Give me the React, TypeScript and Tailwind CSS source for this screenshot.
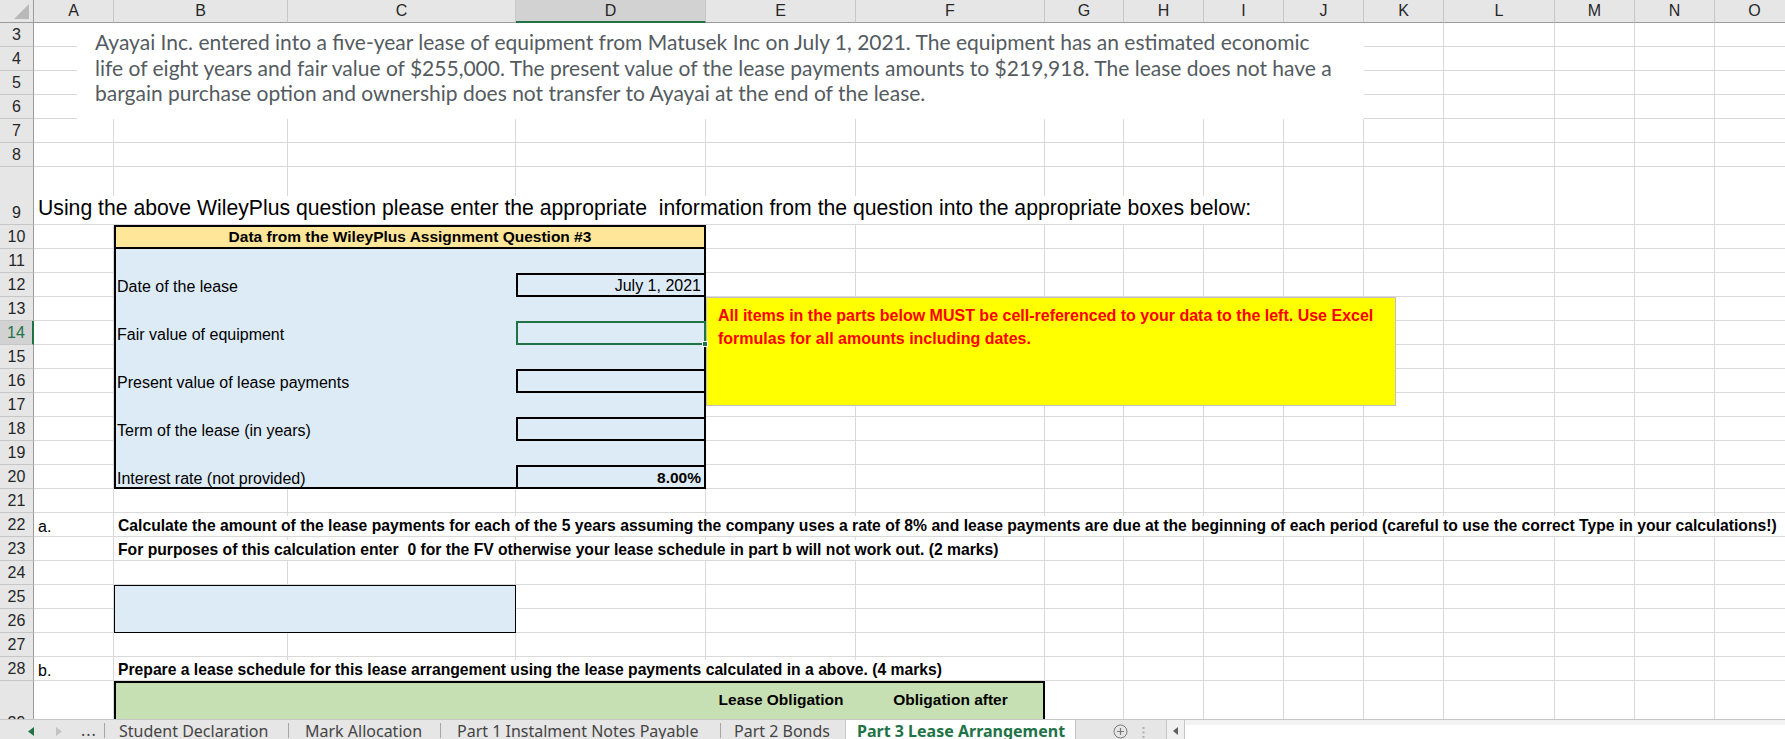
import React from "react";

// same template for the cell layer and the content layer on top of it
const GRID =
  "grid grid-cols-[34px_80px_174px_228px_190px_150px_189px_79px_80px_80px_80px_80px_111px_80px_80px_80px] grid-rows-[23px_repeat(6,24px)_58px_repeat(19,24px)_54px]";

const COLS = ["A", "B", "C", "D", "E", "F", "G", "H", "I", "J", "K", "L", "M", "N", "O"];
const ROWS = [3, 4, 5, 6, 7, 8, 9, 10, 11, 12, 13, 14, 15, 16, 17, 18, 19, 20, 21, 22, 23, 24, 25, 26, 27, 28, 29];

const PARAGRAPH = [
  "Ayayai Inc. entered into a five-year lease of equipment from Matusek Inc on July 1, 2021. The equipment has an estimated economic",
  "life of eight years and fair value of $255,000. The present value of the lease payments amounts to $219,918. The lease does not have a",
  "bargain purchase option and ownership does not transfer to Ayayai at the end of the lease.",
];

function Cells() {
  return (
    <div className={GRID}>
      <div className="relative bg-[#e6e6e6] border-r border-b border-[#9b9b9b]">
        <svg className="absolute right-[4px] bottom-[3px]" width="15" height="15" viewBox="0 0 15 15">
          <polygon points="15,0 15,15 0,15" fill="#b9b9b9" />
        </svg>
      </div>
      {COLS.map((c) =>
        c === "D" ? (
          <div
            key={c}
            className="flex items-center justify-center bg-[#d2d2d2] border-r border-r-[#c6c6c6] border-b-2 border-b-[#217346] text-[16px] text-[#262626]"
          >
            {c}
          </div>
        ) : (
          <div
            key={c}
            className="flex items-center justify-center bg-[#e6e6e6] border-r border-b border-r-[#c6c6c6] border-b-[#9b9b9b] text-[16px] text-[#262626]"
          >
            {c}
          </div>
        )
      )}
      {ROWS.map((r) => (
        <React.Fragment key={r}>
          {r === 14 ? (
            <div className="flex items-end justify-center bg-[#d2d2d2] border-r-2 border-r-[#217346] border-b border-b-[#c6c6c6] text-[16px] leading-[22px] text-[#217346]">
              {r}
            </div>
          ) : (
            <div className="flex items-end justify-center bg-[#e6e6e6] border-r border-b border-r-[#9b9b9b] border-b-[#c6c6c6] text-[16px] leading-[22px] text-[#262626]">
              {r}
            </div>
          )}
          {COLS.map((c) => (
            <div key={c} className="border-r border-b border-[#d9d9d9]" />
          ))}
        </React.Fragment>
      ))}
    </div>
  );
}

function Label({ children, className }: { children: React.ReactNode; className: string }) {
  return (
    <div className={`flex items-end pl-[3px] text-[16px] leading-[20px] text-black whitespace-nowrap ${className}`}>
      {children}
    </div>
  );
}

function Content() {
  return (
    <div className={`absolute inset-0 ${GRID}`}>
      {/* question text box */}
      <div className="col-start-2 col-end-12 row-start-2 row-end-6 ml-[43px] bg-white pl-[18px] pt-[6px] font-['Lato',sans-serif] text-[21px] leading-[25.5px] text-[#545b61] whitespace-nowrap overflow-hidden">
        {PARAGRAPH.map((line) => (
          <div key={line}>{line}</div>
        ))}
      </div>

      {/* row 9 */}
      <div className="col-start-2 col-end-17 row-start-8 flex items-end mb-px">
        <span className="bg-white pl-[4px] pr-[2px] pb-[4px] text-[21.2px] leading-[24px] text-black whitespace-pre">
          Using the above WileyPlus question please enter the appropriate  information from the question into the appropriate boxes below:
        </span>
      </div>

      {/* data block */}
      <div className="col-start-3 col-end-6 row-start-9 flex items-center justify-center bg-[#ffe699] border-2 border-black text-[15.5px] font-bold text-black">
        Data from the WileyPlus Assignment Question #3
      </div>
      <div className="col-start-3 col-end-6 row-start-10 row-end-20 bg-[#ddebf7] border-x-2 border-b-2 border-black" />

      <Label className="col-start-3 col-end-5 row-start-11">Date of the lease</Label>
      <Label className="col-start-3 col-end-5 row-start-13">Fair value of equipment</Label>
      <Label className="col-start-3 col-end-5 row-start-15">Present value of lease payments</Label>
      <Label className="col-start-3 col-end-5 row-start-17">Term of the lease (in years)</Label>
      <Label className="col-start-3 col-end-5 row-start-19">Interest rate (not provided)</Label>

      <div className="col-start-5 row-start-11 flex items-end justify-end pr-[3px] border-2 border-black text-[16px] leading-[19px] text-black">
        July 1, 2021
      </div>
      <div className="relative col-start-5 row-start-13 border-2 border-[#217346]">
        <div className="absolute -right-[4px] -bottom-[4px] w-[6px] h-[6px] bg-[#217346] border border-white" />
      </div>
      <div className="col-start-5 row-start-15 border-2 border-black" />
      <div className="col-start-5 row-start-17 border-2 border-black" />
      <div className="col-start-5 row-start-19 flex items-end justify-end pr-[3px] border-2 border-black text-[15.5px] font-bold leading-[19px] text-black">
        8.00%
      </div>

      {/* note */}
      <div className="col-start-6 col-end-13 row-start-12 row-end-17 mr-[48px] mb-[11px] bg-[#ffff00] border border-[#bfbfbf] pl-[11px] pt-[6px] text-[16px] font-bold leading-[23px] text-[#ff0000] whitespace-nowrap">
        <div>All items in the parts below MUST be cell-referenced to your data to the left. Use Excel</div>
        <div>formulas for all amounts including dates.</div>
      </div>

      {/* part a */}
      <Label className="col-start-2 row-start-21 pl-[4px]">a.</Label>
      <div className="col-start-3 col-end-17 row-start-21 flex items-end mb-px">
        <span className="bg-white pl-[4px] text-[15.7px] font-bold leading-[20px] text-black whitespace-nowrap">
          Calculate the amount of the lease payments for each of the 5 years assuming the company uses a rate of 8% and lease payments are due at the beginning of each period (careful to use the correct Type in your calculations!)
        </span>
      </div>
      <div className="col-start-3 col-end-17 row-start-22 flex items-end mb-px">
        <span className="bg-white pl-[4px] pr-[2px] text-[15.7px] font-bold leading-[20px] text-black whitespace-pre">
          For purposes of this calculation enter  0 for the FV otherwise your lease schedule in part b will not work out. (2 marks)
        </span>
      </div>
      <div className="col-start-3 col-end-5 row-start-24 row-end-26 bg-[#ddebf7] border border-black" />

      {/* part b */}
      <Label className="col-start-2 row-start-27 pl-[4px]">b.</Label>
      <div className="col-start-3 col-end-17 row-start-27 flex items-end mb-px">
        <span className="bg-white pl-[4px] pr-[2px] text-[15.7px] font-bold leading-[20px] text-black whitespace-nowrap">
          Prepare a lease schedule for this lease arrangement using the lease payments calculated in a above. (4 marks)
        </span>
      </div>
      <div className="col-start-3 col-end-8 row-start-28 bg-[#c6e0b4] border-x-2 border-t-2 border-black" />
      <div className="col-start-6 row-start-28 pt-[9px] text-center text-[15.5px] font-bold leading-[20px] text-black">
        Lease Obligation
      </div>
      <div className="col-start-7 row-start-28 pt-[9px] text-center text-[15.5px] font-bold leading-[20px] text-black">
        Obligation after
      </div>
    </div>
  );
}

function Tab({ label, className }: { label: string; className: string }) {
  return (
    <div className={`shrink-0 pt-[1px] text-[#444] whitespace-nowrap ${className}`}>
      {label}
    </div>
  );
}

function Separator() {
  return <div className="shrink-0 w-px h-[15px] mt-[3px] bg-[#a6a6a6]" />;
}

function SheetTabs() {
  return (
    <div className="flex h-[28px] shrink-0 items-start bg-[#e6e6e6] border-t border-[#c6c6c6] font-['Noto_Sans',sans-serif] text-[16px] leading-[20px]">
      <div className="flex items-center h-[20px] w-[104px] shrink-0">
        <svg className="ml-[28px] mt-[2px]" width="6" height="9" viewBox="0 0 6 9">
          <polygon points="6,0 6,9 0,4.5" fill="#217346" />
        </svg>
        <svg className="ml-[22px] mt-[2px]" width="6" height="9" viewBox="0 0 6 9">
          <polygon points="0,0 0,9 6,4.5" fill="#c3c3c3" />
        </svg>
        <span className="ml-[19px] text-[#444] tracking-[1px]">...</span>
      </div>
      <Separator />
      <Tab label="Student Declaration" className="w-[183px] pl-[14px]" />
      <Separator />
      <Tab label="Mark Allocation" className="w-[151px] pl-[16px]" />
      <Separator />
      <Tab label="Part 1 Instalment Notes Payable" className="w-[279px] pl-[16px]" />
      <Separator />
      <Tab label="Part 2 Bonds" className="w-[124px] pl-[13px]" />
      <div className="shrink-0 h-full w-[231px] pl-[11px] pt-[1px] bg-white border-x border-[#c6c6c6] font-bold text-[#217346] whitespace-nowrap">
        Part 3 Lease Arrangement
      </div>
      <div className="flex h-[20px] w-[90px] items-center shrink-0">
        <svg className="ml-[37px] mt-[3px]" width="15" height="15" viewBox="0 0 15 15">
          <circle cx="7.5" cy="7.5" r="6.5" fill="none" stroke="#7a7a7a" strokeWidth="1" />
          <path d="M7.5 4v7M4 7.5h7" stroke="#7a7a7a" strokeWidth="1.2" />
        </svg>
        <svg className="ml-[14px] mt-[4px]" width="3" height="13" viewBox="0 0 3 13">
          <rect x="0.5" y="1" width="2" height="2" fill="#b0b0b0" />
          <rect x="0.5" y="5.5" width="2" height="2" fill="#b0b0b0" />
          <rect x="0.5" y="10" width="2" height="2" fill="#b0b0b0" />
        </svg>
      </div>
      <div className="flex flex-1 h-full bg-white border-l border-[#c6c6c6]">
        <div className="flex w-[18px] h-[20px] items-center justify-center border-r border-[#c6c6c6] bg-[#f0f0f0]">
          <svg className="mt-[2px]" width="5" height="8" viewBox="0 0 5 8">
            <polygon points="5,0 5,8 0,4" fill="#606060" />
          </svg>
        </div>
        <div className="flex-1 border-t-[5px] border-[#f3f3f3]" />
      </div>
    </div>
  );
}

export default function App() {
  return (
    <div className="flex flex-col w-[1785px] h-[739px] overflow-hidden bg-white font-['Liberation_Sans',Arial,sans-serif]">
      <div className="relative h-[719px] shrink-0 overflow-hidden">
        <Cells />
        <Content />
      </div>
      <SheetTabs />
    </div>
  );
}
